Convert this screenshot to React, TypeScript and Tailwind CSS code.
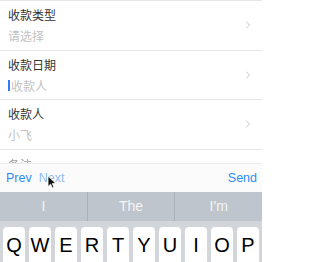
import { ChevronRight } from 'lucide-react';

const CJK = '"Noto Sans CJK SC", "Liberation Sans", sans-serif';
const LATIN = '"Liberation Sans", Arial, sans-serif';

interface Field {
  label: string;
  value: string;
  caret?: boolean;
}

const FIELDS: Field[] = [
  { label: '收款类型', value: '请选择' },
  { label: '收款日期', value: '收款人', caret: true },
  { label: '收款人', value: '小飞' },
];

const KEYS = ['Q', 'W', 'E', 'R', 'T', 'Y', 'U', 'I', 'O', 'P'];
const SUGGESTIONS = ['I', 'The', "I'm"];

function FieldRow({ field }: { field: Field }) {
  return (
    <div className="flex h-[49.5px] items-start border-b border-[#e6e6e6] pl-2 pr-[8px]">
      <div className="flex-1 pt-[4px]">
        <div className="text-[12px] leading-[20px] text-[#333]">{field.label}</div>
        <div className="mt-[1px] flex items-center text-[12px] leading-[20px] text-[#c2c2c2]">
          {field.caret && <span className="mr-[1px] inline-block h-[11px] w-[2px] bg-[#2f7df6]" />}
          {field.value}
        </div>
      </div>
      <ChevronRight className="mt-[18px] h-[12px] w-[12px] text-[#c7c7cc]" strokeWidth={2} />
    </div>
  );
}

export default function App() {
  return (
    <div className="relative h-[262px] w-[262px] overflow-hidden bg-white" style={{ fontFamily: CJK }}>
      {/* Form */}
      <div className="h-[163px] overflow-hidden border-t border-[#e6e6e6]">
        {FIELDS.map((f) => (
          <FieldRow key={f.label} field={f} />
        ))}
        <div className="pl-2 pt-[5px] text-[12px] leading-[20px] text-[#999] blur-[0.6px]">备注</div>
      </div>

      {/* Keyboard accessory bar */}
      <div
        className="flex h-[29px] items-center border-t border-[#ececec] bg-[#fbfbfb] px-[6px] text-[12.5px]"
        style={{ fontFamily: LATIN }}
      >
        <span className="text-[#2d8cf5]">Prev</span>
        <span className="ml-[7px] text-[#8ebcf2]">Next</span>
        <span className="ml-auto mr-[-1px] text-[#2d8cf5]">Send</span>
      </div>

      {/* Predictive bar */}
      <div className="flex h-[29px] bg-[#bfc5cc]" style={{ fontFamily: LATIN }}>
        {SUGGESTIONS.map((s, i) => (
          <div
            key={s}
            className={`flex flex-1 items-center justify-center text-[14px] text-[#f4f5f6] ${
              i < SUGGESTIONS.length - 1 ? 'border-r border-[#aab1b9]' : ''
            }`}
          >
            {s}
          </div>
        ))}
      </div>

      {/* Keys */}
      <div className="flex h-[50px] gap-[4px] bg-[#d2d5da] px-[3px] pt-[6px]" style={{ fontFamily: LATIN }}>
        {KEYS.map((k) => (
          <div
            key={k}
            className="flex h-[42px] w-[22px] items-start justify-center rounded-[4px] bg-white pt-[6px] text-[20px] leading-[24px] text-black shadow-[0_1px_0_#888c93]"
          >
            {k}
          </div>
        ))}
      </div>

      {/* Mouse pointer */}
      <svg className="absolute left-[47px] top-[175px]" width="10" height="14" viewBox="0 0 10 14">
        <path d="M1 1 L1 11.5 L3.6 9.2 L5.4 13 L7 12.3 L5.3 8.6 L8.8 8.6 Z" fill="#111" stroke="#fff" strokeWidth="0.8" />
      </svg>
    </div>
  );
}
